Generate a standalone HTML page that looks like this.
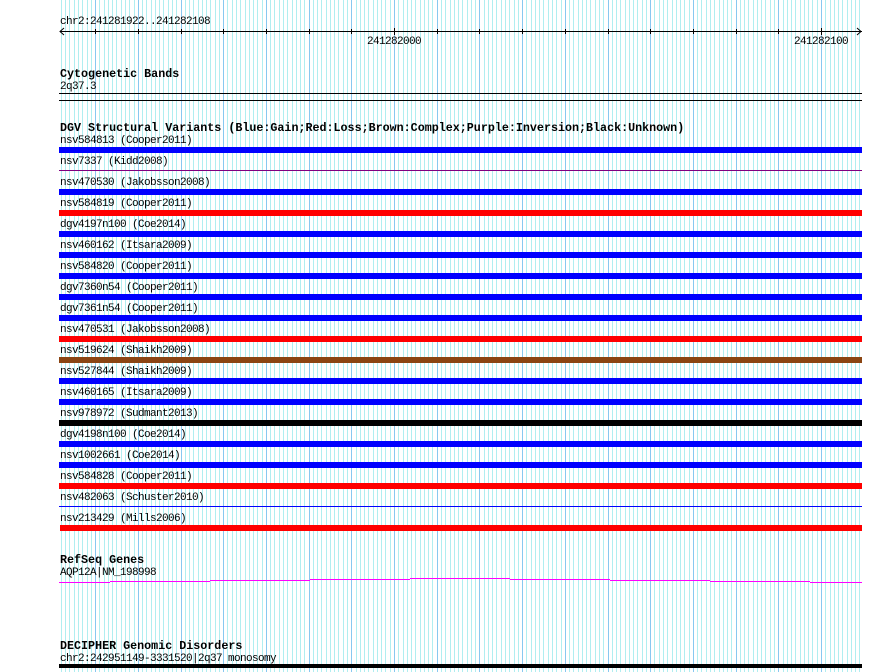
<!DOCTYPE html>
<html><head><meta charset="utf-8"><style>
html,body{margin:0;padding:0;background:#fff;}
svg{display:block}
text{font-family:"Liberation Mono","DejaVu Sans Mono",monospace;font-size:11px;letter-spacing:-0.6px;fill:#000}
.b{font-weight:bold;font-size:11.7px;letter-spacing:0}
</style></head><body>
<svg id="s" width="890" height="672" xmlns="http://www.w3.org/2000/svg" shape-rendering="crispEdges">
<rect width="890" height="672" fill="#fff"/>
<g id="grid"></g>
<text x="60" y="24">chr2:241281922..241282108</text>
<rect x="60" y="31" width="802" height="1" fill="#000"/>
<path d="M64 28 L60 31.5 L64 35 M857 28 L861 31.5 L857 35" stroke="#000" fill="none" shape-rendering="auto"/>
<g id="ticks"></g>
<text x="367" y="44">241282000</text>
<text x="794" y="44">241282100</text>
<text class="b" x="60" y="77">Cytogenetic Bands</text>
<text x="60" y="89">2q37.3</text>
<rect x="59" y="93" width="803" height="1" fill="#000"/>
<rect x="59" y="100" width="803" height="1" fill="#000"/>
<text class="b" x="60" y="131">DGV Structural Variants (Blue:Gain;Red:Loss;Brown:Complex;Purple:Inversion;Black:Unknown)</text>
<g id="dgv"></g>
<text class="b" x="60" y="563">RefSeq Genes</text>
<text x="60" y="575">AQP12A|NM_198998</text>
<g fill="#ff00ff">
<rect x="59" y="582" width="51" height="1"/>
<rect x="110" y="581" width="100" height="1"/>
<rect x="210" y="580" width="100" height="1"/>
<rect x="310" y="579" width="100" height="1"/>
<rect x="410" y="578" width="100" height="1"/>
<rect x="510" y="579" width="100" height="1"/>
<rect x="610" y="580" width="100" height="1"/>
<rect x="710" y="581" width="100" height="1"/>
<rect x="810" y="582" width="52" height="1"/>
</g>
<text class="b" x="60" y="649">DECIPHER Genomic Disorders</text>
<text x="60" y="661">chr2:242951149-3331520|2q37 monosomy</text>
<rect x="59" y="664" width="803" height="4" fill="#000"/>
</svg>
<script>
var NS="http://www.w3.org/2000/svg";
function el(p,t,a){var e=document.createElementNS(NS,t);for(var k in a)e.setAttribute(k,a[k]);p.appendChild(e);return e;}
var g=document.getElementById('grid');
for(var bp=1922;bp<=2109;bp++){var x=Math.round(394+(bp-2000)*4.27);if(x>861)break;
 el(g,'rect',{x:x,y:0,width:1,height:672,fill:(bp%10==0)?'#88c8f0':'#b0eef0'});}
var tk=document.getElementById('ticks');
for(var bp=1930;bp<=2100;bp+=10){var x=Math.round(394+(bp-2000)*4.27);var big=(bp%100==0);
 el(tk,'rect',{x:x,y:big?28:29,width:1,height:big?7:5,fill:'#000'});}
var rows=[["nsv584813 (Cooper2011)","#0000ff",0],["nsv7337 (Kidd2008)","#800080",1],["nsv470530 (Jakobsson2008)","#0000ff",0],["nsv584819 (Cooper2011)","#ff0000",0],["dgv4197n100 (Coe2014)","#0000ff",0],["nsv460162 (Itsara2009)","#0000ff",0],["nsv584820 (Cooper2011)","#0000ff",0],["dgv7360n54 (Cooper2011)","#0000ff",0],["dgv7361n54 (Cooper2011)","#0000ff",0],["nsv470531 (Jakobsson2008)","#ff0000",0],["nsv519624 (Shaikh2009)","#8b4513",0],["nsv527844 (Shaikh2009)","#0000ff",0],["nsv460165 (Itsara2009)","#0000ff",0],["nsv978972 (Sudmant2013)","#000000",0],["dgv4198n100 (Coe2014)","#0000ff",0],["nsv1002661 (Coe2014)","#0000ff",0],["nsv584828 (Cooper2011)","#ff0000",0],["nsv482063 (Schuster2010)","#0000ff",1],["nsv213429 (Mills2006)","#ff0000",0]];
var d=document.getElementById('dgv');
rows.forEach(function(r,i){var y=147+i*21;
 var t=el(d,'text',{x:60,y:y-4});t.textContent=r[0];
 if(r[2])el(d,'rect',{x:59,y:y+2,width:803,height:1,fill:r[1]});
 else el(d,'rect',{x:(i==18?60:59),y:y,width:(i==18?802:803),height:6,fill:r[1]});
});
</script>
</body></html>
